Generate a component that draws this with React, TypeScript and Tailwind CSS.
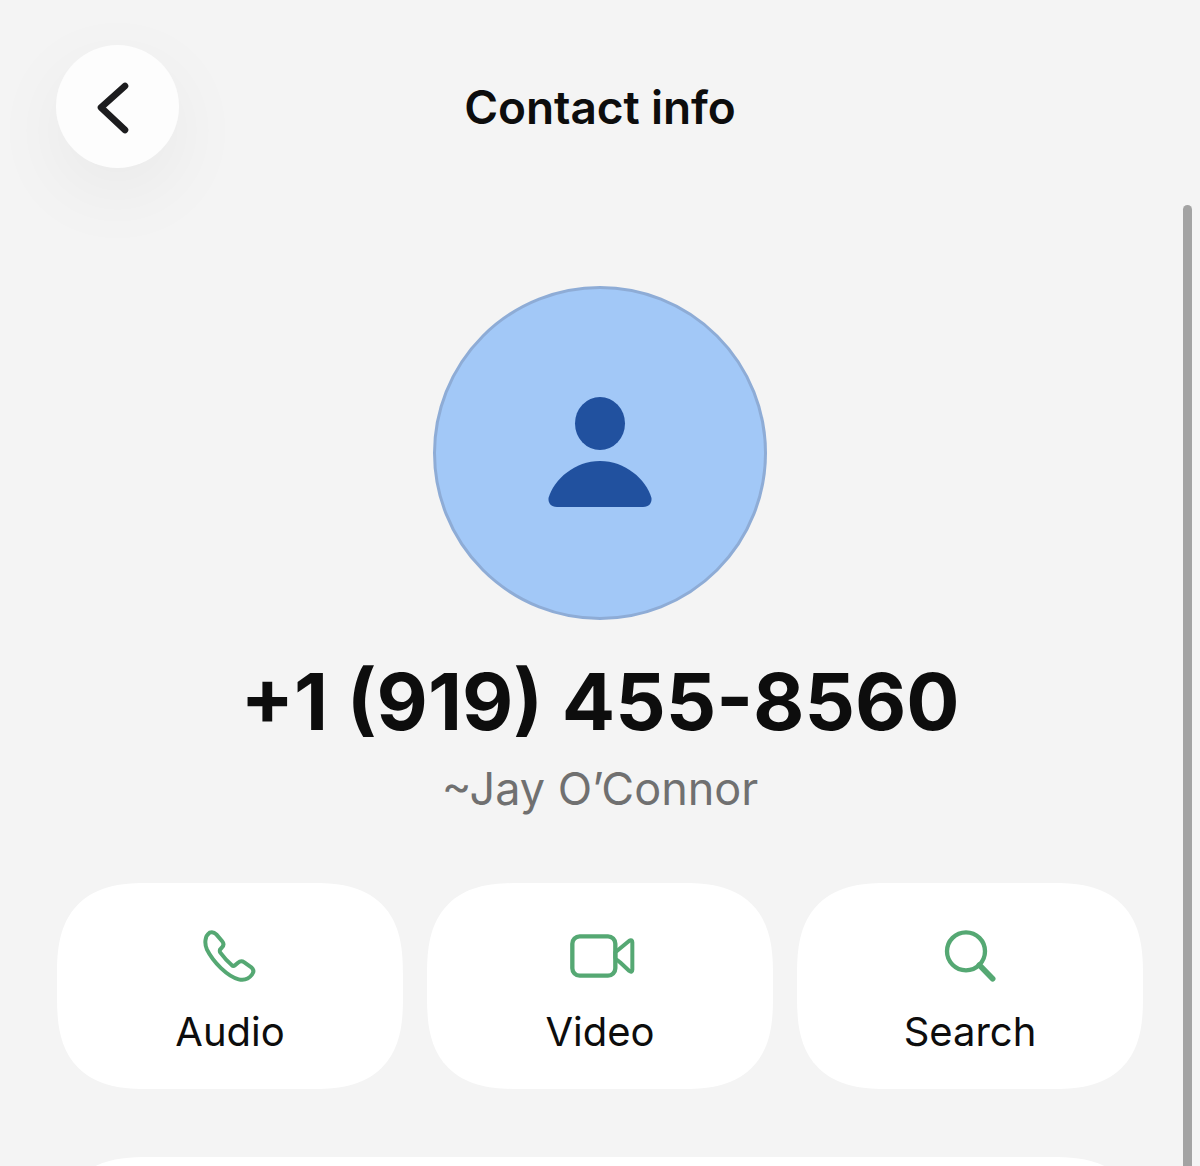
const GREEN = "#55a873";

function BackIcon() {
  return (
    <svg width="123" height="123" viewBox="0 0 123 123" fill="none">
      <path d="M69 41 L45 62.5 L69 85" stroke="#1c1c1e" strokeWidth="6.6" strokeLinecap="round" strokeLinejoin="round" />
    </svg>
  );
}

function PhoneIcon() {
  return (
    <svg width="54" height="54" viewBox="489 179 162 162" fill="none">
      <path
        d="M509 187 C516 184 523 186 529 192 L546 212 C552 219 552 225 546 231 L540 238 C539 241 539 244 541 247 C552 262 563 274 575 284 C578 287 582 287 585 285 L594 277 C600 272 607 272 613 276 L634 291 C641 297 642 305 636 313 C626 326 612 331 596 327 C562 318 520 276 501 238 C493 220 494 197 509 187 Z"
        stroke={GREEN}
        strokeWidth="12"
        strokeLinejoin="round"
      />
    </svg>
  );
}

function VideoIcon() {
  return (
    <svg width="66" height="54" viewBox="447 179 198 162" fill="none" className="ml-[3px]">
      <rect x="457" y="198" width="129" height="118" rx="22" stroke={GREEN} strokeWidth="13" />
      <path d="M586 246 L628 211 C633 208 637 210 637 216 L637 298 C637 304 633 306 628 302 L600 276 C592 268 586 268 586 262 Z" stroke={GREEN} strokeWidth="12" strokeLinejoin="round" />
    </svg>
  );
}

function SearchIcon() {
  return (
    <svg width="54" height="54" viewBox="459 179 162 162" fill="none">
      <circle cx="528" cy="243" r="57" stroke={GREEN} strokeWidth="13" />
      <path d="M568 284 L608 325" stroke={GREEN} strokeWidth="17" strokeLinecap="round" />
    </svg>
  );
}

function Action({ icon, label }: { icon: React.ReactNode; label: string }) {
  return (
    <div className="flex h-[206px] flex-col items-center rounded-[92px] bg-white pt-[47px] [corner-shape:superellipse(1.4)]">
      <div className="flex h-[54px] items-center justify-center">{icon}</div>
      <div className="mt-[24px] text-[40px] leading-[48px] text-[#0d0d0d]">{label}</div>
    </div>
  );
}

export default function App() {
  return (
    <div className="relative h-[1166px] w-[1200px] overflow-hidden bg-[#f4f4f4] font-['Inter',sans-serif]">
      <div className="px-[57px] pt-[45px]">
        <div className="grid grid-cols-[123px_1fr_123px] items-center">
          <div className="h-[123px] w-[123px] -translate-x-px rounded-full bg-[#fdfdfd] shadow-[0_24px_80px_rgba(0,0,0,0.05)]">
            <BackIcon />
          </div>
          <div className="text-center text-[46px] font-semibold leading-[56px] tracking-[-0.1px] text-[#0d0d0d]">
            Contact info
          </div>
          <div />
        </div>

        <div className="mt-[118px] flex flex-col items-center">
          <div className="flex h-[334px] w-[334px] items-center justify-center rounded-full border-[3px] border-[#8eacd6] bg-[#a2c8f7]">
            <svg width="104" height="110" viewBox="0 0 104 110" className="mt-[-3px]">
              <ellipse cx="52" cy="26.5" rx="25" ry="26.5" fill="#21519f" />
              <path
                d="M9 110 C3 110 0 106 0.5 101 C6 82 27 64 52 64 C77 64 98 82 103.5 101 C104 106 101 110 95 110 Z"
                fill="#21519f"
              />
            </svg>
          </div>
          <div className="mt-[31px] text-[79px] font-bold leading-[100px] text-[#0d0d0d]">+1 (919) 455-8560</div>
          <div className="mt-[11px] text-[45px] leading-[54px] text-[#707070]">~Jay O’Connor</div>
        </div>

        <div className="mt-[67px] grid grid-cols-3 gap-[24px]">
          <Action icon={<PhoneIcon />} label="Audio" />
          <Action icon={<VideoIcon />} label="Video" />
          <Action icon={<SearchIcon />} label="Search" />
        </div>

        <div className="mt-[68px] h-[200px] rounded-[92px] bg-white [corner-shape:superellipse(1.4)]" />
      </div>

      <div className="absolute bottom-0 left-[1183px] top-[205px] w-[9px] rounded-t-full bg-[#a3a3a3]" />
    </div>
  );
}
